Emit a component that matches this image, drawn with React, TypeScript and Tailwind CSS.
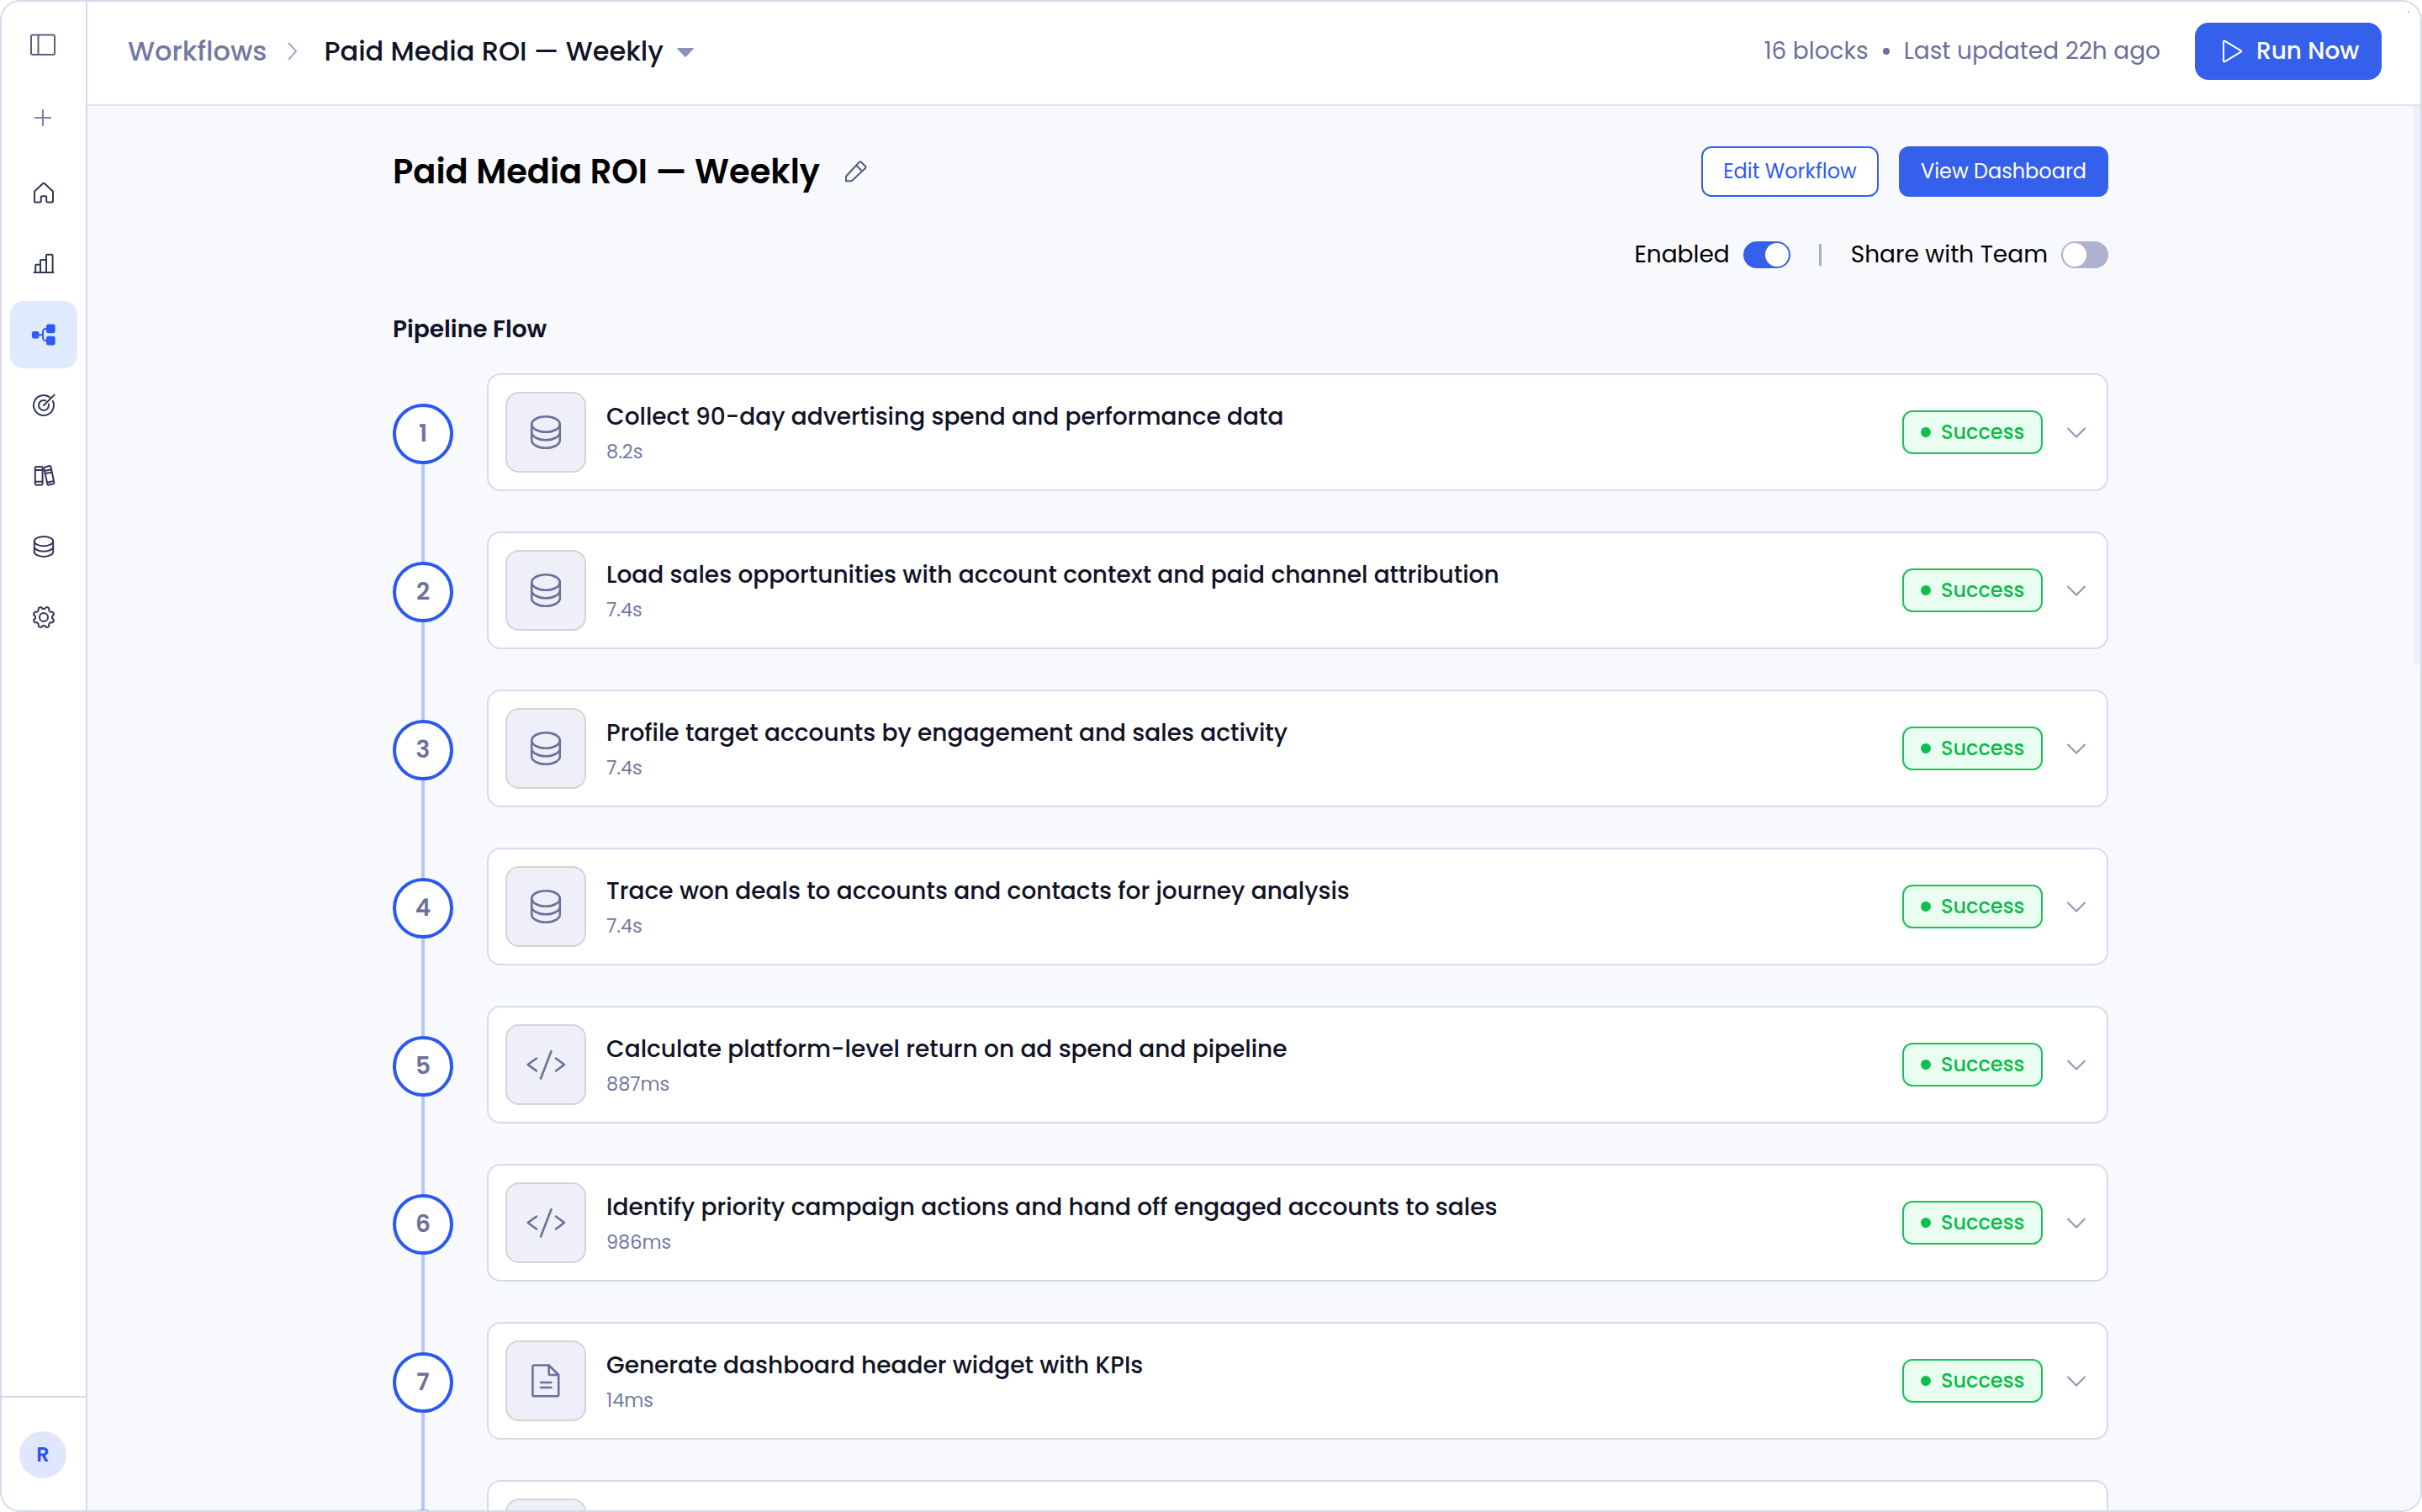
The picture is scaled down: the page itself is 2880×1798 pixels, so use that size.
import { useState } from "react";
import type { ReactNode } from "react";
import clsx from "clsx";

type StepKind = "data" | "code" | "file";

interface Step {
  title: string;
  duration: string;
  kind: StepKind;
}

const steps: Step[] = [
  { title: "Collect 90-day advertising spend and performance data", duration: "8.2s", kind: "data" },
  { title: "Load sales opportunities with account context and paid channel attribution", duration: "7.4s", kind: "data" },
  { title: "Profile target accounts by engagement and sales activity", duration: "7.4s", kind: "data" },
  { title: "Trace won deals to accounts and contacts for journey analysis", duration: "7.4s", kind: "data" },
  { title: "Calculate platform-level return on ad spend and pipeline", duration: "887ms", kind: "code" },
  { title: "Identify priority campaign actions and hand off engaged accounts to sales", duration: "986ms", kind: "code" },
  { title: "Generate dashboard header widget with KPIs", duration: "14ms", kind: "file" },
];

// eight soft teeth around a 32x32 box
const gearPath =
  Array.from({ length: 96 }, (_, i) => {
    const a = (i / 96) * Math.PI * 2;
    const r = 11.3 - (1.3 * Math.tanh(2 * Math.cos(8 * a))) / Math.tanh(2);
    return `${i ? "L" : "M"}${(16 + r * Math.cos(a)).toFixed(2)} ${(16 + r * Math.sin(a)).toFixed(2)}`;
  }).join("") + "Z";

function NavSvg({ children }: { children: ReactNode }) {
  return (
    <svg width="32" height="32" viewBox="0 0 32 32" fill="none" stroke="currentColor" strokeWidth="2" strokeLinecap="round" strokeLinejoin="round">
      {children}
    </svg>
  );
}

const navItems: { id: string; icon: ReactNode }[] = [
  {
    id: "home",
    icon: <path d="M5.4 13.2 15 4.2a1.5 1.5 0 0 1 2 0l9.6 9a1.3 1.3 0 0 1 .4 1V25a1.6 1.6 0 0 1-1.6 1.6h-4.8a1.4 1.4 0 0 1-1.4-1.4v-4.6a1.4 1.4 0 0 0-1.4-1.4h-3.6a1.4 1.4 0 0 0-1.4 1.4v4.6a1.4 1.4 0 0 1-1.4 1.4H6.6A1.6 1.6 0 0 1 5 25V14.2a1.3 1.3 0 0 1 .4-1Z" />,
  },
  {
    id: "analytics",
    icon: <path d="M4.5 26h23M6.2 26v-8.2a1 1 0 0 1 1-1h4.6M12 26V12a1 1 0 0 1 1-1h6M19 26V5.8a1 1 0 0 1 1-1h5.600a1 1 0 0 1 1 1V26" />,
  },
  {
    id: "workflows",
    icon: (
      <>
        <rect x="2.9" y="13" width="6.6" height="6.4" rx="1.2" fill="currentColor" />
        <rect x="20" y="4.6" width="8.6" height="8.6" rx="1.2" fill="currentColor" />
        <rect x="20" y="18.8" width="8.6" height="8.6" rx="1.2" fill="currentColor" />
        <path d="M10 16.2h5M20 9h-1.5a3.500 3.500 0 0 0-3.500 3.500v7a3.500 3.500 0 0 0 3.500 3.500H20" />
      </>
    ),
  },
  {
    id: "goals",
    icon: (
      <>
        <path d="M23.6 6.7A12 12 0 1 0 26.8 10.8" />
        <path d="M18.2 10.4A6 6 0 1 0 21.8 14.5" />
        <path d="M16 16 28.6 3.6" />
      </>
    ),
  },
  {
    id: "library",
    icon: (
      <>
        <rect x="5.8" y="4.9" width="8.8" height="21.8" rx="1.4" />
        <path d="M5.8 9h8.8M5.8 22.8h8.8" />
        <path d="M17.2 5.4 23 4.1a1.2 1.2 0 0 1 1.4.9l4 19a1.2 1.2 0 0 1-.9 1.4l-5.7 1.2a1.2 1.2 0 0 1-1.4-.9L16.3 6.8a1.2 1.2 0 0 1 .9-1.4ZM17 10l8-1.7M17.700 13.200l8-1.700M20 23.800l8-1.700" />
      </>
    ),
  },
  {
    id: "data",
    icon: (
      <>
        <ellipse cx="16" cy="9.6" rx="11.2" ry="5.7" />
        <path d="M4.8 9.6v12.6c0 3.1 5 5.7 11.2 5.7s11.2-2.6 11.2-5.7V9.6M4.8 16c0 3.1 5 5.7 11.2 5.7S27.2 19.1 27.2 16" />
      </>
    ),
  },
  {
    id: "settings",
    icon: (
      <>
        <path d={gearPath} />
        <circle cx="16" cy="16" r="5" />
      </>
    ),
  },
];

function StepIcon({ kind }: { kind: StepKind }) {
  return (
    <svg width="48" height="40" viewBox="0 0 48 40" fill="none" stroke="currentColor" strokeWidth="2.6" strokeLinecap="round" strokeLinejoin="round">
      {kind === "data" && (
        <>
          <ellipse cx="24" cy="10.5" rx="16.8" ry="9.2" />
          <path d="M7.2 10.5v19c0 5.1 7.5 9.2 16.8 9.2s16.800-4.100 16.800-9.200v-19M7.200 20c0 5.100 7.500 9.200 16.800 9.200S40.800 25.100 40.800 20" />
        </>
      )}
      {kind === "code" && <path d="M13 12.5 2.7 20 13 27.5M30.5 4l-12.5 32.5M36 12.5l10 7.500-10 7.500" />}
      {kind === "file" && (
        <path d="M10.2 1.5h17.5l11.5 11.5v23.500a1.800 1.800 0 0 1-1.800 1.800h-27.200a1.800 1.800 0 0 1-1.800-1.800v-33.200a1.800 1.800 0 0 1 1.800-1.800ZM27.700 1.500v10a1.500 1.500 0 0 0 1.500 1.500h10M18 22h12.500M18 28h12.500" />
      )}
    </svg>
  );
}

function Sidebar() {
  return (
    <aside className="flex w-[102px] shrink-0 flex-col border-r-2 border-[#d5daec] bg-white">
      <div className="flex flex-col items-center pt-[37px] text-[#5b5f86]">
        <svg className="mr-0.5" width="32" height="28" viewBox="0 0 32 28" fill="none" stroke="currentColor" strokeWidth="2">
          <rect x="2" y="2.5" width="28" height="23.5" rx="2" />
          <path d="M10.5 2.5V26" />
        </svg>
        <svg className="mr-0.5 mt-[61px] text-[#7d81a4]" width="24" height="24" viewBox="0 0 24 24" fill="none" stroke="currentColor" strokeWidth="2">
          <path d="M12 2v20M2 12h20" />
        </svg>
      </div>
      <nav className="mt-[38px] flex flex-col items-center gap-1">
        {navItems.map((item) => (
          <button
            key={item.id}
            className={clsx("flex size-20 items-center justify-center rounded-2xl", item.id === "workflows" ? "bg-[#dfeafe] text-[#2f5cf0]" : "text-[#34365a]")}
          >
            <NavSvg>{item.icon}</NavSvg>
          </button>
        ))}
      </nav>
      <div className="mt-auto flex h-[136px] items-center justify-center border-t-2 border-[#d5daec] pt-0.5 pr-0.5">
        <div className="flex size-14 items-center justify-center rounded-full bg-[#e0e6fe] text-2xl font-semibold text-[#2a55ee]">R</div>
      </div>
    </aside>
  );
}

function Header() {
  return (
    <header className="flex h-[124px] shrink-0 items-center justify-between border-b-2 border-[#e1e3f1] bg-white pr-[46px] pb-1 pl-12">
      <div className="flex items-center text-[32px] font-medium">
        <span className="text-[#717aa5]">Workflows</span>
        <svg className="mr-[31px] ml-[25px]" width="12" height="22" viewBox="0 0 12 22" fill="none" stroke="#9298bb" strokeWidth="1.8">
          <path d="m1 1 9 10-9 10" />
        </svg>
        <span className="text-[#111327]">Paid Media ROI — Weekly</span>
        <svg className="mt-0.5 ml-[16px]" width="20" height="11" viewBox="0 0 20 11" fill="#8b92b8">
          <path d="M1 0h18a.8.8 0 0 1 .6 1.3l-8.6 9a1.4 1.4 0 0 1-2 0L.4 1.3A.8.8 0 0 1 1 0Z" />
        </svg>
      </div>
      <div className="flex items-center">
        <div className="flex items-center text-[28px] text-[#6b7199]">
          <span>16 blocks</span>
          <span className="mx-[17px] size-2 rounded-full bg-[#6b7199]" />
          <span>Last updated 22h ago</span>
        </div>
        <button className="ml-[41px] flex h-[68px] w-[222px] items-center rounded-2xl bg-[#3560ec] pl-[32px] text-[28px] font-medium text-white">
          <svg className="mr-[15px]" width="26" height="30" viewBox="0 0 26 30" fill="none" stroke="currentColor" strokeWidth="2" strokeLinejoin="round">
            <path d="M2 3.3v23.4a.8.8 0 0 0 1.3.6l19.5-11.6a.8.8 0 0 0 0-1.4L3.3 2.7A.8.8 0 0 0 2 3.3Z" />
          </svg>
          <span className="whitespace-nowrap">Run Now</span>
        </button>
      </div>
    </header>
  );
}

function Toggle({ on, onChange }: { on: boolean; onChange: (v: boolean) => void }) {
  return (
    <button onClick={() => onChange(!on)} className={clsx("flex h-8 w-14 items-center rounded-full p-0.5", on ? "justify-end bg-[#3560ec]" : "justify-start bg-[#aeb2d1]")}>
      <span className="size-7 rounded-full bg-white" />
    </button>
  );
}

function StepRow({ step, index }: { step: Step; index: number }) {
  return (
    <div className="flex h-[188px] gap-10">
      <div className="flex w-[72px] shrink-0 flex-col items-center">
        <div className={clsx("h-9 w-1 shrink-0", index > 0 && "bg-[#b4c6f8]")} />
        <div className="flex size-[72px] shrink-0 items-center justify-center rounded-full border-4 border-[#2b59f0] bg-white text-[28px] font-semibold text-[#6b7199]">{index + 1}</div>
        <div className="w-1 flex-1 bg-[#b4c6f8]" />
      </div>
      <div className="flex h-[140px] flex-1 items-center rounded-2xl border-2 border-[#d6daec] bg-white pr-6 pl-5">
        <div className="flex size-24 shrink-0 items-center justify-center rounded-2xl border-2 border-[#d4d4d6] bg-[#efeff9] text-[#6b7199]">
          <StepIcon kind={step.kind} />
        </div>
        <div className="ml-6 flex-1 pt-0.5">
          <div className="text-[28px] leading-[42px] font-medium text-[#111327]">{step.title}</div>
          <div className="pt-0.5 text-[22.4px] leading-9 text-[#717aa5]">{step.duration}</div>
        </div>
        <div className="flex h-[52px] w-[167px] items-center rounded-xl border-2 border-[#1cc15b] bg-[#e9fef1] pl-5 text-2xl font-medium text-[#0db94c]">
          <span className="mr-3 size-3 rounded-full bg-[#0fbd50]" />
          Success
        </div>
        <svg className="ml-7" width="24" height="14" viewBox="0 0 24 14" fill="none" stroke="#8f95ba" strokeWidth="2">
          <path d="M1.5 2 12 12.5 22.5 2" />
        </svg>
      </div>
    </div>
  );
}

// top edge of the next step, cut by the viewport
function NextStepPeek() {
  return (
    <div className="flex h-[37px] gap-10 overflow-hidden">
      <div className="flex w-[72px] shrink-0 flex-col items-center">
        <div className="h-[35px] w-1 shrink-0 bg-[#b4c6f8]" />
        <div className="size-[72px] shrink-0 rounded-full border-4 border-[#8fabf6] bg-white" />
      </div>
      <div className="h-[140px] flex-1 rounded-2xl border-2 border-[#d6daec] bg-white px-5 py-5">
        <div className="size-24 rounded-2xl border-2 border-[#d4d4d6] bg-[#efeff9]" />
      </div>
    </div>
  );
}

export default function App() {
  const [enabled, setEnabled] = useState(true);
  const [shared, setShared] = useState(false);

  return (
    <div className="h-[1798px] w-[2880px] bg-white font-[Poppins,Inter,sans-serif]">
      <div className="relative flex h-full overflow-hidden rounded-3xl border-2 border-[#d5d9ea] bg-white">
        <Sidebar />
        <div className="flex min-w-0 flex-1 flex-col">
          <Header />
          <main className="min-h-0 flex-1 overflow-hidden bg-[#f8f9fd] pt-12 pr-2">
            <div className="mx-auto w-[2040px]">
              <div className="flex h-[60px] items-center justify-between">
                <div className="flex items-center">
                  <h1 className="text-[40px] font-semibold text-black">Paid Media ROI — Weekly</h1>
                  <svg className="ml-[29px]" width="28" height="28" viewBox="0 0 28 28" fill="none" stroke="#565b86" strokeWidth="2" strokeLinejoin="round">
                    <path d="M2 25.3v-5.6L17.7 2.7a1.6 1.6 0 0 1 2.3 0l5 5a1.6 1.6 0 0 1 0 2.3L8.6 25.3ZM14 6.5l7.2 7" />
                  </svg>
                </div>
                <div className="flex gap-6 text-2xl">
                  <button className="flex h-[60px] w-[211px] items-center justify-center rounded-xl border-2 border-[#3560ec] bg-white text-[#2f5cf0]">Edit Workflow</button>
                  <button className="flex h-[60px] w-[249px] items-center justify-center rounded-xl bg-[#3560ec] text-white">View Dashboard</button>
                </div>
              </div>

              <div className="mt-[53px] flex h-8 items-center justify-end text-[28px] text-black">
                <span className="mr-4">Enabled</span>
                <Toggle on={enabled} onChange={setEnabled} />
                <span className="mr-[35px] ml-[34px] h-[26px] w-[3px] bg-[#a9aece]" />
                <span className="mr-4">Share with Team</span>
                <Toggle on={shared} onChange={setShared} />
              </div>

              <h2 className="mt-[52px] text-[28px] leading-[42px] font-semibold text-[#111327]">Pipeline Flow</h2>

              <div className="mt-[31px]">
                {steps.map((step, i) => (
                  <StepRow key={step.title} step={step} index={i} />
                ))}
                <NextStepPeek />
              </div>
            </div>
          </main>
        </div>
        <div className="absolute top-[124px] right-0 h-[664px] w-2 rounded-bl-md bg-[#eeeff8]" />
        <div className="absolute top-[11px] right-[13px] h-[3px] w-0.5 bg-[#c9c9cc]" />
      </div>
    </div>
  );
}
